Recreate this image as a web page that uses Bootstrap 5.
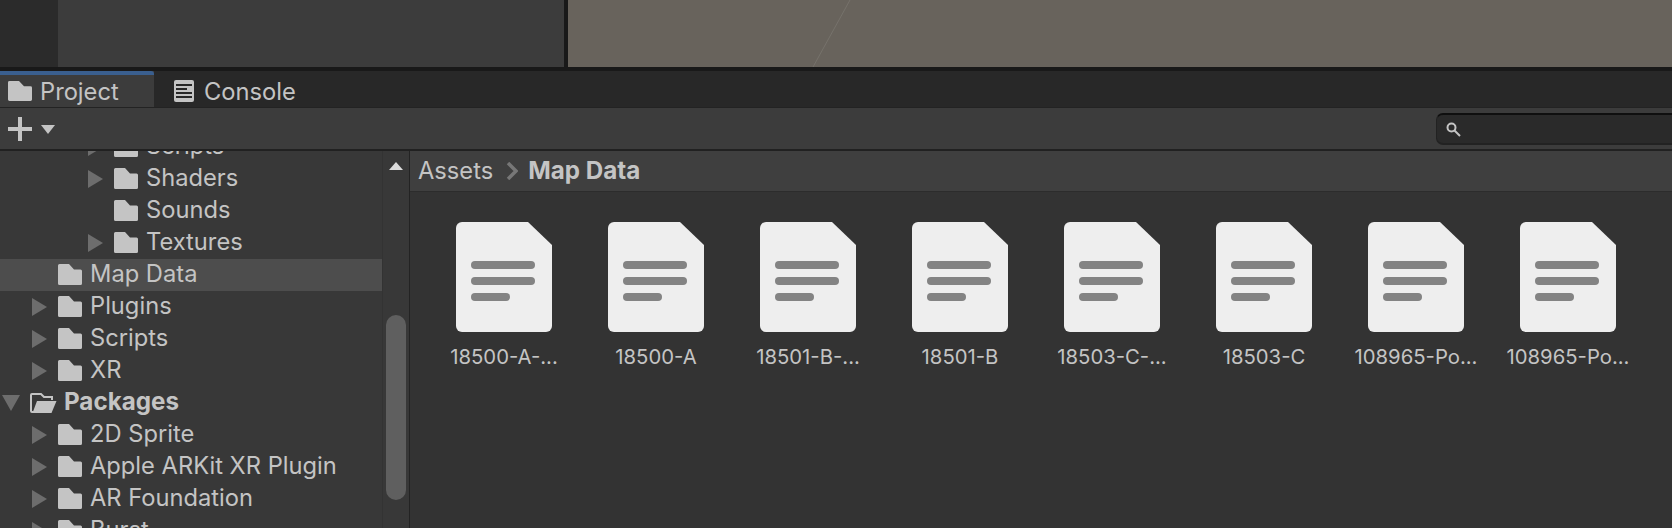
<!DOCTYPE html>
<html lang="en">
<head>
<meta charset="utf-8">
<title>Project</title>
<link rel="stylesheet" href="https://cdn.jsdelivr.net/npm/bootstrap@5.3.0/dist/css/bootstrap.min.css">
<style>
html,body{height:528px;overflow:hidden;background:#191919;}
body{font-family:Inter,"Liberation Sans",sans-serif;font-size:23.7px;color:#c4c4c4;line-height:32px;}
.top-area{height:67px;}
.top-rail{width:58px;background:#2b2b2b;}
.top-hier{width:506px;background:#3c3c3c;}
.top-split{width:4px;background:#191919;}
.scene-view{background:#68635c;position:relative;overflow:hidden;}
.scene-line{position:absolute;left:0;top:0;width:300px;height:67px;}
.top-gap{height:4px;background:#191919;}
.tab-strip{height:36px;background:#282828;}
.tab-one{width:154px;background:#3c3c3c;position:relative;padding-left:8px;gap:8px;}
.tab-one::before{content:"";position:absolute;left:0;right:0;top:0;height:4px;background:#3a5f8f;border-top-right-radius:3px;}
.tab-two{padding-left:20px;gap:10px;}
.tab-label{padding-top:5px;}
.sep-a{height:1px;background:#232323;}
.tools{height:41px;background:#3c3c3c;padding-left:8px;}
.tools-drop{margin-left:9px;margin-top:2px;}
.search-box{width:236px;height:32px;margin-left:auto;background:#2a2a2a;border-top:2px solid #0f0f0f;border-bottom:2px solid #222;border-left:1px solid #222;border-top-left-radius:7px;border-bottom-left-radius:7px;padding-left:9px;}
.search-glass{margin-top:1px;}
.sep-b{height:2px;background:#212121;}
.main-pane{height:377px;}
.tree-pane{width:382px;background:#383838;overflow:hidden;}
.tree-list{margin-top:-20px;}
.tree-row{height:32px;}
.tree-row.sel{background:#4d4d4d;}
.tree-row>span{margin-top:-2px;}
.tree-fold{margin-top:-1px;}
.lvl-1{padding-left:32px;}
.lvl-2{padding-left:88px;}
.lvl-0{padding-left:2px;}
.arrow-slot{width:15px;flex:none;margin-right:11px;}
.tree-row>span.arrow-slot{margin-top:0;}
.lvl-0 .arrow-slot{width:18px;margin-right:10px;}
.name-txt{margin-left:8px;}
.bold-txt{font-weight:700;font-size:24.2px;margin-left:7px;}
.scroll-pane{width:27px;background:#383838;border-left:1px solid #333;position:relative;}
.scroll-arrow{position:absolute;left:6px;top:11px;}
.scroll-thumb{position:absolute;left:3px;top:164px;width:20px;height:185px;border-radius:10px;background:#5f5f5f;}
.pane-split{width:1px;background:#232323;}
.content-pane{background:#333;}
.crumbs{height:40px;background:#3f3f3f;padding-left:8px;gap:13px;}
.crumb-b{font-weight:700;font-size:24.2px;margin-left:-3px;}
.sep-c{height:1px;background:#2c2c2c;}
.file-grid{padding:30px 0 0 18px;}
.file-cell{width:152px;}
.file-name{font-size:20.3px;line-height:24px;margin-top:13px;white-space:nowrap;color:#c4c4c4;}
</style>
</head>
<body>
<svg width="0" height="0" class="d-block">
  <symbol id="i-folder" viewBox="0 0 24 21" preserveAspectRatio="none"><path d="M1.500 0H11L16 5.500H22.500A1.500 1.500 0 0 1 24 7V19.500A1.500 1.500 0 0 1 22.500 21H1.500A1.500 1.500 0 0 1 0 19.500V1.500A1.500 1.500 0 0 1 1.500 0Z" fill="#c4c4c4"/></symbol>
  <symbol id="i-right" viewBox="0 0 15 18"><path d="M0 0L15 9L0 18Z" fill="#6d6d6d"/></symbol>
  <symbol id="i-doc" viewBox="0 0 96 110" preserveAspectRatio="none">
    <path d="M6 0H72L96 23V104A6 6 0 0 1 90 110H6A6 6 0 0 1 0 104V6A6 6 0 0 1 6 0Z" fill="#eeeeee"/>
    <rect x="15" y="39" width="64" height="8" rx="4" fill="#838383"/>
    <rect x="15" y="55" width="64" height="8" rx="4" fill="#838383"/>
    <rect x="15" y="71" width="39" height="8" rx="4" fill="#838383"/>
  </symbol>
</svg>

<div class="top-area d-flex">
  <div class="top-rail"></div>
  <div class="top-hier"></div>
  <div class="top-split"></div>
  <div class="scene-view flex-grow-1">
    <svg class="scene-line" viewBox="0 0 300 67"><path d="M282 0L245 67" stroke="#76726b" stroke-width="1" fill="none"/></svg>
  </div>
</div>
<div class="top-gap"></div>

<div class="tab-strip d-flex">
  <div class="tab-one d-flex align-items-center">
    <svg width="24" height="20" class="mt-1"><use href="#i-folder"/></svg>
    <span class="tab-label">Project</span>
  </div>
  <div class="tab-two d-flex align-items-center">
    <svg width="20" height="22" viewBox="0 0 20 22" class="mt-1"><rect width="20" height="22" rx="2" fill="#c4c4c4"/><path d="M2 5H18M2 9H13M2 13H18M2 17H18" stroke="#282828" stroke-width="2"/></svg>
    <span class="tab-label">Console</span>
  </div>
</div>
<div class="sep-a"></div>

<div class="tools d-flex align-items-center">
  <svg width="24" height="24" viewBox="0 0 24 24"><path d="M10 0H14V10H24V14H14V24H10V14H0V10H10Z" fill="#c4c4c4"/></svg>
  <svg width="14" height="9" viewBox="0 0 14 9" class="tools-drop"><path d="M0 0H14L7 9Z" fill="#c4c4c4"/></svg>
  <div class="search-box d-flex align-items-center">
    <svg width="15" height="15" viewBox="0 0 15 15" class="search-glass"><circle cx="5.500" cy="5.500" r="4" fill="none" stroke="#c4c4c4" stroke-width="2"/><path d="M8.500 8.500L14 14" stroke="#c4c4c4" stroke-width="2"/></svg>
  </div>
</div>
<div class="sep-b"></div>

<div class="main-pane d-flex">
  <div class="tree-pane">
    <div class="tree-list">
      <div class="tree-row lvl-2 d-flex align-items-center"><svg class="arrow-slot" height="18"><use href="#i-right"/></svg><svg class="tree-fold" width="24" height="21"><use href="#i-folder"/></svg><span class="name-txt">Scripts</span></div>
      <div class="tree-row lvl-2 d-flex align-items-center"><svg class="arrow-slot" height="18"><use href="#i-right"/></svg><svg class="tree-fold" width="24" height="21"><use href="#i-folder"/></svg><span class="name-txt">Shaders</span></div>
      <div class="tree-row lvl-2 d-flex align-items-center"><span class="arrow-slot"></span><svg class="tree-fold" width="24" height="21"><use href="#i-folder"/></svg><span class="name-txt">Sounds</span></div>
      <div class="tree-row lvl-2 d-flex align-items-center"><svg class="arrow-slot" height="18"><use href="#i-right"/></svg><svg class="tree-fold" width="24" height="21"><use href="#i-folder"/></svg><span class="name-txt">Textures</span></div>
      <div class="tree-row sel lvl-1 d-flex align-items-center"><span class="arrow-slot"></span><svg class="tree-fold" width="24" height="21"><use href="#i-folder"/></svg><span class="name-txt">Map Data</span></div>
      <div class="tree-row lvl-1 d-flex align-items-center"><svg class="arrow-slot" height="18"><use href="#i-right"/></svg><svg class="tree-fold" width="24" height="21"><use href="#i-folder"/></svg><span class="name-txt">Plugins</span></div>
      <div class="tree-row lvl-1 d-flex align-items-center"><svg class="arrow-slot" height="18"><use href="#i-right"/></svg><svg class="tree-fold" width="24" height="21"><use href="#i-folder"/></svg><span class="name-txt">Scripts</span></div>
      <div class="tree-row lvl-1 d-flex align-items-center"><svg class="arrow-slot" height="18"><use href="#i-right"/></svg><svg class="tree-fold" width="24" height="21"><use href="#i-folder"/></svg><span class="name-txt">XR</span></div>
      <div class="tree-row lvl-0 d-flex align-items-center">
        <svg class="arrow-slot" height="16" viewBox="0 0 18 16"><path d="M0 0H18L9 16Z" fill="#6d6d6d"/></svg>
        <svg width="27" height="20" viewBox="0 0 27 20"><path d="M1 18V2A1 1 0 0 1 2 1H11L14 4H22V7M1 18A1 1 0 0 0 2 19H4" fill="none" stroke="#c4c4c4" stroke-width="2"/><path d="M7 8H26.500L21.500 20H2.500Z" fill="#c4c4c4"/></svg>
        <span class="bold-txt">Packages</span>
      </div>
      <div class="tree-row lvl-1 d-flex align-items-center"><svg class="arrow-slot" height="18"><use href="#i-right"/></svg><svg class="tree-fold" width="24" height="21"><use href="#i-folder"/></svg><span class="name-txt">2D Sprite</span></div>
      <div class="tree-row lvl-1 d-flex align-items-center"><svg class="arrow-slot" height="18"><use href="#i-right"/></svg><svg class="tree-fold" width="24" height="21"><use href="#i-folder"/></svg><span class="name-txt">Apple ARKit XR Plugin</span></div>
      <div class="tree-row lvl-1 d-flex align-items-center"><svg class="arrow-slot" height="18"><use href="#i-right"/></svg><svg class="tree-fold" width="24" height="21"><use href="#i-folder"/></svg><span class="name-txt">AR Foundation</span></div>
      <div class="tree-row lvl-1 d-flex align-items-center"><svg class="arrow-slot" height="18"><use href="#i-right"/></svg><svg class="tree-fold" width="24" height="21"><use href="#i-folder"/></svg><span class="name-txt">Burst</span></div>
    </div>
  </div>
  <div class="scroll-pane">
    <svg class="scroll-arrow" width="14" height="8" viewBox="0 0 14 8"><path d="M7 0L14 8H0Z" fill="#dcdcdc"/></svg>
    <div class="scroll-thumb"></div>
  </div>
  <div class="pane-split"></div>
  <div class="content-pane flex-grow-1">
    <div class="crumbs d-flex align-items-center">
      <span>Assets</span>
      <svg width="12" height="18" viewBox="0 0 12 18"><path d="M2 1L10 9L2 17" fill="none" stroke="#777" stroke-width="3.500"/></svg>
      <span class="crumb-b">Map Data</span>
    </div>
    <div class="sep-c"></div>
    <div class="file-grid d-flex">
      <div class="file-cell d-flex flex-column align-items-center"><svg width="96" height="110"><use href="#i-doc"/></svg><span class="file-name">18500-A-...</span></div>
      <div class="file-cell d-flex flex-column align-items-center"><svg width="96" height="110"><use href="#i-doc"/></svg><span class="file-name">18500-A</span></div>
      <div class="file-cell d-flex flex-column align-items-center"><svg width="96" height="110"><use href="#i-doc"/></svg><span class="file-name">18501-B-...</span></div>
      <div class="file-cell d-flex flex-column align-items-center"><svg width="96" height="110"><use href="#i-doc"/></svg><span class="file-name">18501-B</span></div>
      <div class="file-cell d-flex flex-column align-items-center"><svg width="96" height="110"><use href="#i-doc"/></svg><span class="file-name">18503-C-...</span></div>
      <div class="file-cell d-flex flex-column align-items-center"><svg width="96" height="110"><use href="#i-doc"/></svg><span class="file-name">18503-C</span></div>
      <div class="file-cell d-flex flex-column align-items-center"><svg width="96" height="110"><use href="#i-doc"/></svg><span class="file-name">108965-Po...</span></div>
      <div class="file-cell d-flex flex-column align-items-center"><svg width="96" height="110"><use href="#i-doc"/></svg><span class="file-name">108965-Po...</span></div>
    </div>
  </div>
</div>
<script src="https://cdn.jsdelivr.net/npm/bootstrap@5.3.0/dist/js/bootstrap.bundle.min.js"></script>
</body>
</html>
